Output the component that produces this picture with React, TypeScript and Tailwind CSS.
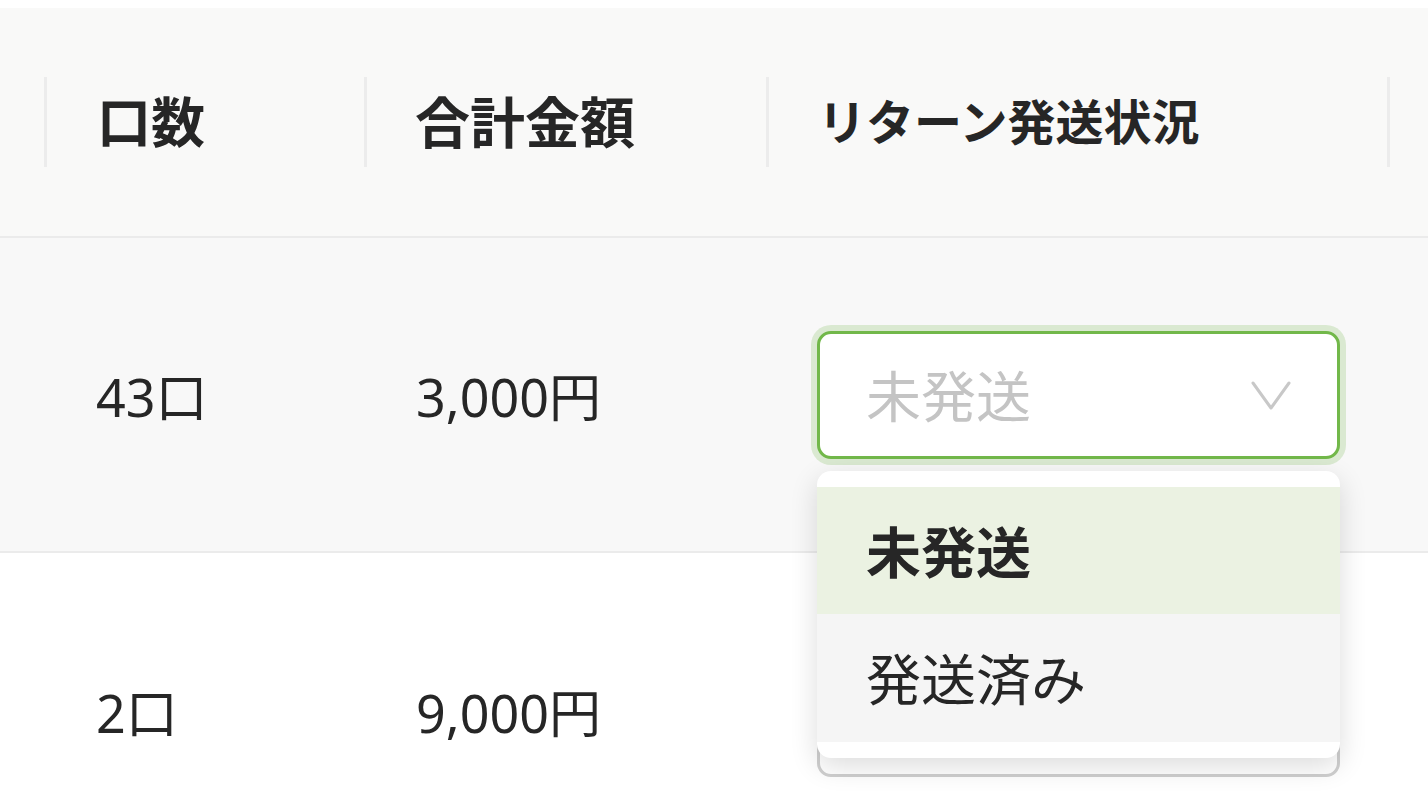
const font = { fontFamily: '"Noto Sans", "Noto Sans CJK JP", sans-serif' };

function Sep() {
  return <span className="h-[90px] w-[3px] shrink-0 bg-[#ececec]" />;
}

function Chevron() {
  return (
    <svg width="40" height="30" viewBox="0 0 40 30" fill="none" className="shrink-0">
      <path d="M2 3 L20 28 L38 3" stroke="#c8c8c8" strokeWidth="3" strokeLinecap="round" strokeLinejoin="round" />
    </svg>
  );
}

export default function App() {
  return (
    <div className="h-[792px] w-[1428px] overflow-hidden bg-white pt-2 text-[#262626]" style={font}>
      {/* header */}
      <div className="flex h-[230px] items-center border-b-2 border-[#ebebeb] bg-[#f9f9f8] pl-[44px]">
        <div className="flex w-[320px] items-center">
          <Sep />
          <span className="pl-[50px] text-[54px] font-semibold">口数</span>
        </div>
        <div className="flex w-[402px] items-center">
          <Sep />
          <span className="pl-[48px] text-[55px] font-semibold">合計金額</span>
        </div>
        <div className="flex w-[621px] items-center">
          <Sep />
          <span className="pl-[49px] text-[48px] font-semibold">リターン発送状況</span>
        </div>
        <div className="flex flex-1 items-center">
          <Sep />
        </div>
      </div>

      {/* row 1 */}
      <div className="relative z-10 flex h-[315px] items-center border-b-2 border-[#ebebeb] bg-[#f8f8f8] pl-[44px]">
        <div className="w-[320px] pl-[52px] pt-1 text-[52px]">43口</div>
        <div className="w-[402px] pl-[52px] pt-1 text-[52px]">3,000円</div>
        <div className="relative w-[621px] pl-[51px]">
          <div className="flex h-[128px] w-[523px] items-center justify-between rounded-[14px] border-[3px] border-[#72b84a] bg-white pl-[46px] pr-[46px] shadow-[0_0_0_6px_rgba(114,184,74,0.22)]">
            <span className="pt-1 text-[55px] text-[#c4c4c4]">未発送</span>
            <Chevron />
          </div>
          <div className="absolute left-[51px] top-[140px] w-[523px] rounded-[14px] bg-white py-4 shadow-[0_8px_28px_rgba(0,0,0,0.14)]">
            <div className="flex h-[127px] items-center bg-[#ebf2e2] pl-[49px] pt-1 text-[55px] font-bold">未発送</div>
            <div className="flex h-[128px] items-center bg-[#f5f5f5] pl-[49px] pt-1 text-[55px]">発送済み</div>
          </div>
        </div>
      </div>

      {/* row 2 */}
      <div className="flex h-[320px] items-center bg-white pl-[44px]">
        <div className="w-[320px] pl-[52px] text-[52px]">2口</div>
        <div className="w-[402px] pl-[52px] text-[52px]">9,000円</div>
        <div className="w-[621px] pl-[51px]">
          <div className="flex h-[128px] w-[523px] items-center rounded-[14px] border-[3px] border-[#cfcfcf] bg-white" />
        </div>
      </div>
    </div>
  );
}
